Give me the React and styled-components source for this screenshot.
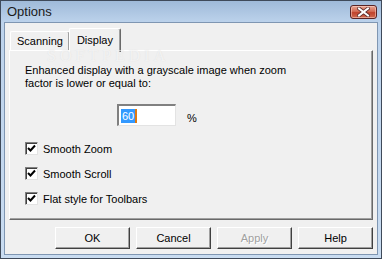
import React from "react";
import styled, { createGlobalStyle } from "styled-components";

const Global = createGlobalStyle`
  html, body { margin: 0; padding: 0; background: #f0f0f0; }
  body { font-family: "Liberation Sans", Arial, sans-serif; }
`;

const Window = styled.div`
  position: relative;
  width: 382px;
  height: 259px;
  box-sizing: border-box;
  border: 1px solid #3f4a5a;
  background: linear-gradient(#9fbad9, #bdd3ec 22px, #c9dcf1);
  display: flex;
  flex-direction: column;
  padding: 0 3px 3px 3px;
  overflow: hidden;
`;

const TitleBar = styled.div`
  height: 21px;
  display: flex;
  align-items: center;
  justify-content: space-between;
  padding: 0 1px 0 3px;
  flex-shrink: 0;
`;

const Title = styled.span`
  font-size: 13px;
  color: #1a1a1a;
`;

const CloseBtn = styled.div`
  width: 27px;
  height: 14px;
  box-sizing: border-box;
  border: 1px solid #5a2424;
  border-radius: 3px;
  background: linear-gradient(#e9a592, #d36c55 45%, #c0432c 55%, #cf6a50);
  display: flex;
  align-items: center;
  justify-content: center;
  box-shadow: inset 0 0 0 1px rgba(255, 220, 210, 0.5);
`;

const Client = styled.div`
  flex: 1;
  background: #f0f0f0;
  border: 1px solid #7f96b2;
  display: flex;
  flex-direction: column;
  padding: 3px 4px 0 4px;
  position: relative;
`;

const Tabs = styled.div`
  display: flex;
  align-items: flex-end;
  height: 24px;
  padding-left: 1px;
  position: relative;
  z-index: 1;
`;

const Tab = styled.div`
  box-sizing: border-box;
  height: ${(p) => (p.$active ? "24px" : "19px")};
  padding: 0 ${(p) => (p.$active ? "7px" : "6px")};
  margin-left: ${(p) => (p.$active ? "-1px" : "0")};
  margin-bottom: ${(p) => (p.$active ? "-2px" : "0")};
  background: #f0f0f0;
  border-top: 1px solid #ffffff;
  border-left: 1px solid #ffffff;
  border-right: 1px solid #696969;
  box-shadow: inset -1px 0 0 #a0a0a0;
  border-radius: 2px 2px 0 0;
  font-size: 11px;
  line-height: 13px;
  color: #000;
  display: flex;
  align-items: ${(p) => (p.$active ? "flex-start" : "center")};
  padding-top: ${(p) => (p.$active ? "5px" : "0")};
  position: relative;
  z-index: ${(p) => (p.$active ? 2 : 1)};
`;

const Panel = styled.div`
  box-sizing: border-box;
  height: 170px;
  border-top: 1px solid #ffffff;
  border-left: 1px solid #ffffff;
  border-right: 1px solid #696969;
  border-bottom: 1px solid #696969;
  box-shadow: inset -1px -1px 0 #a0a0a0;
  padding: 13px 15px 0 15px;
  display: flex;
  flex-direction: column;
  position: relative;
`;

const Watermark = styled.div`
  position: absolute;
  left: 42px;
  top: 25px;
  font-family: "Liberation Serif", serif;
  font-size: 16px;
  line-height: 16px;
  letter-spacing: 4px;
  color: rgba(255, 255, 255, 0.6);
  text-shadow: 0 0 1px rgba(190, 190, 190, 0.4);
  pointer-events: none;
  z-index: 3;
`;

const Desc = styled.div`
  font-size: 11px;
  line-height: 13px;
  color: #000;
`;

const InputRow = styled.div`
  display: flex;
  align-items: center;
  margin-top: 14px;
  padding-left: 92px;
  gap: 11px;
`;

const NumBox = styled.div`
  width: 59px;
  height: 22px;
  box-sizing: border-box;
  background: #fff;
  border-top: 2px solid #808080;
  border-left: 2px solid #808080;
  border-right: 1px solid #e3e3e3;
  border-bottom: 1px solid #e3e3e3;
  display: flex;
  align-items: center;
  padding-left: 2px;
`;

const Sel = styled.span`
  background: #3399ff;
  color: #fff;
  font-size: 11px;
  line-height: 14px;
  padding: 0 1px;
  border-right: 2px solid #e07a10;
`;

const Unit = styled.span`
  font-size: 11px;
  margin-top: 5px;
`;

const Checks = styled.div`
  display: flex;
  flex-direction: column;
  gap: 12px;
  margin-top: 16px;
`;

const CheckRow = styled.div`
  display: flex;
  align-items: center;
  gap: 5px;
  font-size: 11px;
  height: 13px;
`;

const Box = styled.div`
  width: 13px;
  height: 13px;
  box-sizing: border-box;
  background: #fff;
  border-top: 1px solid #808080;
  border-left: 1px solid #808080;
  border-right: 1px solid #e3e3e3;
  border-bottom: 1px solid #e3e3e3;
  box-shadow: inset 1px 1px 0 #404040;
  display: flex;
  align-items: center;
  justify-content: center;
`;

const Buttons = styled.div`
  display: flex;
  justify-content: flex-end;
  gap: 6px;
  margin-top: 7px;
`;

const Button = styled.div`
  width: 75px;
  height: 22px;
  box-sizing: border-box;
  background: #f0f0f0;
  border-top: 1px solid #ffffff;
  border-left: 1px solid #ffffff;
  border-right: 1px solid #404040;
  border-bottom: 1px solid #404040;
  box-shadow: inset -1px -1px 0 #a0a0a0;
  display: flex;
  align-items: center;
  justify-content: center;
  font-size: 11px;
  color: ${(p) => (p.$disabled ? "#a0a0a0" : "#000")};
  text-shadow: ${(p) => (p.$disabled ? "1px 1px 0 #ffffff" : "none")};
`;

const Check = () => (
  <svg width="9" height="9" viewBox="0 0 9 9">
    <path d="M1 4 L3.5 6.5 L8 1.5" stroke="#000" strokeWidth="2" fill="none" />
  </svg>
);

const CloseX = () => (
  <svg width="13" height="10" viewBox="0 0 13 10">
    <path
      d="M2 1.5 L11 8.5 M11 1.5 L2 8.5"
      stroke="#5a2a2a"
      strokeWidth="3.6"
      strokeLinecap="square"
      fill="none"
    />
    <path
      d="M2 1.5 L11 8.5 M11 1.5 L2 8.5"
      stroke="#ffffff"
      strokeWidth="2"
      strokeLinecap="square"
      fill="none"
    />
  </svg>
);

export default function App() {
  return (
    <>
      <Global />
      <Window>
        <TitleBar>
          <Title>Options</Title>
          <CloseBtn>
            <CloseX />
          </CloseBtn>
        </TitleBar>
        <Client>
          <Tabs>
            <Tab>Scanning</Tab>
            <Tab $active>Display</Tab>
          </Tabs>
          <Panel>
            <Desc>
              Enhanced display with a grayscale image when zoom
              <br />
              factor is lower or equal to:
            </Desc>
            <InputRow>
              <NumBox>
                <Sel>60</Sel>
              </NumBox>
              <Unit>%</Unit>
            </InputRow>
            <Checks>
              <CheckRow>
                <Box>
                  <Check />
                </Box>
                Smooth Zoom
              </CheckRow>
              <CheckRow>
                <Box>
                  <Check />
                </Box>
                Smooth Scroll
              </CheckRow>
              <CheckRow>
                <Box>
                  <Check />
                </Box>
                Flat style for Toolbars
              </CheckRow>
            </Checks>
          </Panel>
          <Watermark>SOFTPEDIA</Watermark>
          <Buttons>
            <Button>OK</Button>
            <Button>Cancel</Button>
            <Button $disabled>Apply</Button>
            <Button>Help</Button>
          </Buttons>
        </Client>
      </Window>
    </>
  );
}
